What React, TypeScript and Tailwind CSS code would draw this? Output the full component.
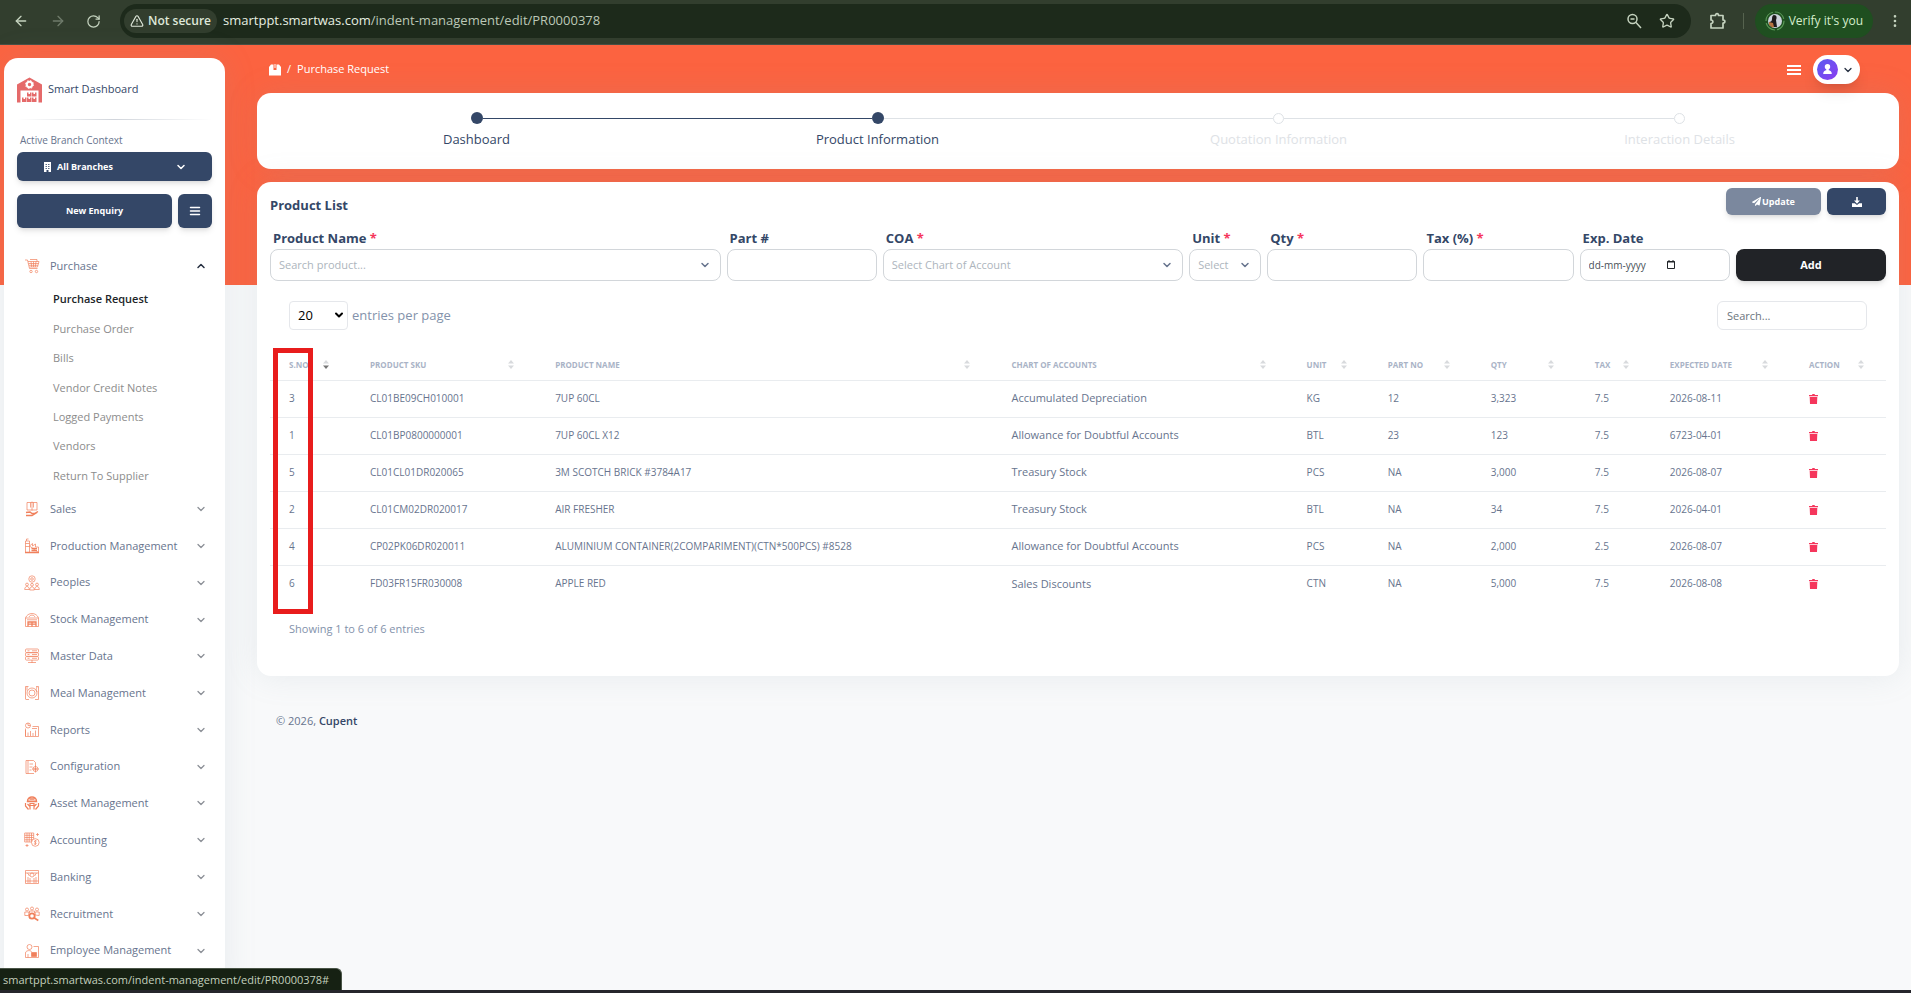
import React from 'react';
import { AlignJustify, ArrowLeft, ArrowRight, ChevronDown, ChevronUp, EllipsisVertical, RotateCw, Star, TriangleAlert } from 'lucide-react';
import { FaPaperPlane } from 'react-icons/fa';

const subItems = [
  'Purchase Request',
  'Purchase Order',
  'Bills',
  'Vendor Credit Notes',
  'Logged Payments',
  'Vendors',
  'Return To Supplier',
];

const icons: Record<string, React.ReactNode> = {
  Purchase: (
    <>
      <path d="M1 2h2.5l2 8.5h8" />
      <path d="M4 3.5h11l-1.5 5.5H5.5M4.5 5.5h10M5 7.3h9M7 3.5l.7 5.5M9.5 3.5V9M12 3.5l-.7 5.5M6 1.5h7v2" />
      <circle cx="7" cy="13.5" r="1.2" />
      <circle cx="12.5" cy="13.5" r="1.2" />
    </>
  ),
  Sales: (
    <>
      <path d="M3 1.5h10V9H3zM6.5 1.5v5M9.5 1.5v5M8 .5v9" />
      <path d="M2 11.5l4-.5 2 1.5h2.5l3.5-2M2 14.5h6l5-3" strokeWidth="1.4" />
    </>
  ),
  'Production Management': (
    <>
      <path d="M1.5 14.5V3h4v11.5M1.5 5.5h4M2.500 3V1h2M1.5 8.5h4M5.5 8l3-2.5V8l3-2v3h3v5.5z" />
      <path d="M1 14.5h14M7.5 10.5H13M7.5 12.5H13" strokeWidth="1.3" />
    </>
  ),
  Peoples: (
    <>
      <circle cx="8" cy="4" r="3.2" />
      <circle cx="8" cy="4" r="1.3" />
      <circle cx="3" cy="9.5" r="1.4" />
      <circle cx="8" cy="9.8" r="1.4" />
      <circle cx="13" cy="9.5" r="1.4" />
      <path d="M.7 14.5c0-4 4.6-4 4.6 0zM5.7 15c0-4.2 4.6-4.2 4.6 0zM10.7 14.5c0-4 4.6-4 4.6 0z" />
    </>
  ),
  'Stock Management': (
    <>
      <path d="M1.5 14.5V6c2-6 11-6 13 0v8.5zM1.5 6h13M3 7.8h10M5 5c1-2.5 5-2.5 6 0" />
      <path d="M4 14.5V10h8v4.5M4 12.2h8M8 10v4.5" strokeWidth="1.3" />
    </>
  ),
  'Master Data': (
    <>
      <rect x="1.5" y="1" width="13" height="3.5" rx="1" />
      <rect x="1.5" y="4.8" width="13" height="3.5" rx="1" />
      <rect x="1.5" y="8.6" width="13" height="3.5" rx="1" />
      <path d="M3.5 2.8h2M8 2.8h5M3.5 6.5h2M8 6.5h5M3.5 10.3h2M8 10.3h5M8 12v3M4 14.5h8" />
    </>
  ),
  'Meal Management': (
    <>
      <circle cx="8" cy="8" r="5" />
      <circle cx="8" cy="8" r="3" />
      <path d="M1.5 1.5v13M3 1.5v4M14.5 1.5v13M13 2c-1 2-1 3 0 5M1.5 1.5h3M12 1.5h2.5M2 14.5h3M11 14.5h3.5" />
    </>
  ),
  Reports: (
    <>
      <circle cx="4" cy="3.5" r="2.5" />
      <path d="M4 1v2.5h2.5M8.5 4.5h6v10h-13V8M1.5 6.5v8M8 6.5h5M4 14v-3.5M6.5 14V9M9 14v-3M11.5 14V8.5" />
    </>
  ),
  Configuration: (
    <>
      <path d="M2 1.5h7.5l2 2v4M2 1.5v13h8M4 1.5v13M5.5 5H9M5.5 8h3M5.5 11h2" />
      <circle cx="11.5" cy="10" r="2.5" />
      <circle cx="11.5" cy="10" r=".8" />
      <path d="M11.5 6.5v7M8 10h7" />
    </>
  ),
  'Asset Management': (
    <>
      <path d="M3.5 6.5c0-6 9-6 9 0zM5.5 4h5M4 6.3h8" strokeWidth="1.5" />
      <path d="M6 8.5h4v2H6zM1.5 8v3l3 3.5M14.5 8v3l-3 3.5M3.5 9L6 11.5v3M12.5 9L10 11.5v3" strokeWidth="1.2" />
    </>
  ),
  Accounting: (
    <>
      <path d="M.7 1h9v9h-9zM.7 3.3h9M.7 5.5h9M.7 7.8h9M3 1v9M5.2 1v9M7.5 1v9" />
      <circle cx="11.3" cy="10.5" r="3.8" fill="white" />
      <path d="M12.7 9c-2-1-3 1-1.3 1.5s.7 2.3-1.5 1.3M11.3 8v5M13.5 1v3M12 2.5h3M3 12v3M1.5 13.5h3" />
    </>
  ),
  Banking: (
    <>
      <path d="M1.5 1.5h13v13h-13zM1.5 4h13M3.5 4l2 3M12.5 4l-2 3M4 8v6M6 9v5M10 9v5M12 8v6M1.5 12h13" />
      <circle cx="8" cy="6" r="2" />
    </>
  ),
  Recruitment: (
    <>
      <circle cx="3" cy="3.5" r="1.5" />
      <circle cx="8" cy="2.5" r="1.5" />
      <circle cx="13" cy="3.5" r="1.5" />
      <path d="M.8 9.5V6h4v3M5.5 7V5h5v2M11.2 9V6h4v3.5zM.8 9.5h4" />
      <circle cx="8" cy="10" r="2.7" strokeWidth="1.8" />
      <path d="M10.3 12l4 2.5" strokeWidth="1.6" />
    </>
  ),
  'Employee Management': (
    <>
      <circle cx="5.5" cy="4" r="2.5" />
      <path d="M1.5 14.5V10c0-3 6-3 6-1M1.5 14.5h13v-11h-5M4 14.5V11" />
      <path d="M7.5 9.5h5v4h-5z" fill="#f0805c" />
    </>
  ),
};

const columns = [
  { label: 'S.NO', width: 'w-[81px]' },
  { label: 'PRODUCT SKU', width: 'w-[185px]' },
  { label: 'PRODUCT NAME', width: 'w-[456px]' },
  { label: 'CHART OF ACCOUNTS', width: 'w-[295px]' },
  { label: 'UNIT', width: 'w-[81px]' },
  { label: 'PART NO', width: 'w-[103px]' },
  { label: 'QTY', width: 'w-[104px]' },
  { label: 'TAX', width: 'w-[75px]' },
  { label: 'EXPECTED DATE', width: 'w-[139px]' },
  { label: 'ACTION', width: 'w-[96px]' },
];

const rows = [
  ['3', 'CL01BE09CH010001', '7UP 60CL', 'Accumulated Depreciation', 'KG', '12', '3,323', '7.5', '2026-08-11'],
  ['1', 'CL01BP0800000001', '7UP 60CL X12', 'Allowance for Doubtful Accounts', 'BTL', '23', '123', '7.5', '6723-04-01'],
  ['5', 'CL01CL01DR020065', '3M SCOTCH BRICK #3784A17', 'Treasury Stock', 'PCS', 'NA', '3,000', '7.5', '2026-08-07'],
  ['2', 'CL01CM02DR020017', 'AIR FRESHER', 'Treasury Stock', 'BTL', 'NA', '34', '7.5', '2026-04-01'],
  ['4', 'CP02PK06DR020011', 'ALUMINIUM CONTAINER(2COMPARIMENT)(CTN*500PCS) #8528', 'Allowance for Doubtful Accounts', 'PCS', 'NA', '2,000', '2.5', '2026-08-07'],
  ['6', 'FD03FR15FR030008', 'APPLE RED', 'Sales Discounts', 'CTN', 'NA', '5,000', '7.5', '2026-08-08'],
];

const steps = [
  { label: 'Dashboard', done: true, line: 'bg-[#344767]' },
  { label: 'Product Information', done: true, line: 'bg-[#dee2e6]' },
  { label: 'Quotation Information', done: false, line: 'bg-[#dee2e6]' },
  { label: 'Interaction Details', done: false, line: '' },
];

const panelShadow = 'shadow-[0_0_32px_0_rgba(136,152,170,0.15)]';

const fieldClass = 'h-8 w-full appearance-none rounded-lg border border-[#d2d6da] bg-white px-2 outline-none';

function BrowserBar() {
  return (
    <header className="flex h-[45px] shrink-0 items-start border-b border-[#474f45] bg-[#323e2e] pt-1 text-[#c5d3bf]">
      <div className="flex h-[34px] w-[120px] shrink-0 items-center justify-between pr-[19px] pl-[13px]">
        <button aria-label="Back"><ArrowLeft className="size-4" /></button>
        <button aria-label="Forward" className="text-[#6f7b6b]"><ArrowRight className="size-4" /></button>
        <button aria-label="Reload"><RotateCw className="size-[15px]" /></button>
      </div>
      <div className="flex h-[34px] flex-1 items-center rounded-full bg-[#1d2a1b] pr-4 pl-1">
        <button className="flex h-6 items-center gap-1 rounded-full bg-[#323e2e] px-1.5 text-xs font-semibold text-[#dfe8da]">
          <TriangleAlert className="size-[14px]" />
          Not secure
        </button>
        <p className="ml-1.5 flex-1 text-[13px] text-[#bcc8b7]">
          <span className="text-[#e6efe1]">smartppt.smartwas.com</span>/indent-management/edit/PR0000378
        </p>
        <button aria-label="Zoom" className="mr-[17px]">
          <svg viewBox="0 0 16 16" className="size-4" fill="none" stroke="currentColor" strokeWidth="1.5">
            <circle cx="6.5" cy="6" r="4.5" />
            <path d="M4.5 6h4M10 9.5l5 5.5" />
          </svg>
        </button>
        <button aria-label="Bookmark"><Star className="size-4" /></button>
      </div>
      <div className="flex h-[34px] shrink-0 items-center pr-2 pl-[18px]">
        <button aria-label="Extensions">
          <svg viewBox="0 0 18 18" className="size-[18px]" fill="none" stroke="currentColor" strokeWidth="1.7" strokeLinejoin="round">
            <path d="M2 3.5h4.5c0-2.5 3-2.5 3 0H14V8c2.5 0 2.5 3 0 3v5H2v-4.5c2.5 0 2.5-3.5 0-3.5z" />
          </svg>
        </button>
        <span className="mr-[11px] ml-4 h-4 w-px bg-[#56634f]" />
        <button className="flex h-[34px] items-center gap-1 rounded-full bg-[#1f4f20] px-2.5 text-xs text-[#d5edcc]">
          <svg viewBox="0 0 20 20" className="size-5">
            <circle cx="10" cy="10" r="9" fill="none" stroke="#5a9a58" strokeWidth="1.2" strokeDasharray="12 2" />
            <circle cx="10" cy="10" r="7" fill="#cdd3dc" />
            <path d="M9 4c3 0 3 3 2 5l1 7H6l-2-5c2 0 3-1 3-3 0-3 1-4 2-4z" fill="#1e1a1c" />
            <path d="M4 11l4 1 1 4-2 .5-3-3z" fill="#b8743f" />
          </svg>
          Verify it's you
        </button>
        <button aria-label="Menu" className="ml-3.5"><EllipsisVertical className="size-4" /></button>
      </div>
    </header>
  );
}

function Sidebar() {
  return (
    <aside className={`mt-[13px] ml-1 flex w-[221px] shrink-0 flex-col rounded-t-[14px] bg-white px-[13px] ${panelShadow}`}>
      <a href="#" className="mt-[18px] flex h-[27px] items-center gap-1.5 text-[11px] text-[#344767]">
        <svg viewBox="0 0 25 26" className="h-[26px] w-[25px]" fill="#e56a6a">
          <path d="M0 7.5L12.5.5 25 7.5v18h-3.5v-12h-18v12H0z" />
          <circle cx="12.5" cy="7.5" r="2.7" fill="none" stroke="white" strokeWidth="2" />
          <circle cx="12.5" cy="7.5" r="4" fill="none" stroke="white" strokeWidth="1" strokeDasharray="1.57 1.57" />
          <path d="M10 15.5h1.5V17H13v-1.5h1.5v4H10zM15 15.5h1.5V17H18v-1.5h1.5v4H15zM5 20.5h1.5V22H8v-1.5h1.5V25H5zM10 20.5h1.5V22H13v-1.5h1.5V25H10zM15 20.5h1.5V22H18v-1.5h1.5V25H15z" />
        </svg>
        Smart Dashboard
      </a>
      <div className="mt-4 h-px bg-linear-to-r from-transparent via-gray-300 to-transparent" />
      <p className="mt-3 ml-[3px] text-[10px] leading-4 text-[#67748e]">Active Branch Context</p>
      <button className="mt-1 flex h-[29px] items-center rounded-md bg-[#344767] pr-[25px] pl-[27px] text-[9px] font-bold text-white shadow-md">
        <svg viewBox="0 0 7 10" className="mr-1.5 h-2.5 w-[7px]">
          <path d="M0 0h7v10H4.500V8h-2v2H0z" fill="white" />
          <path d="M1.5 2.5H3M4 2.5h1.5M1.5 4.5H3M4 4.5h1.5M1.5 6.5H3M4 6.5h1.5" stroke="#344767" strokeWidth=".8" />
        </svg>
        All Branches
        <ChevronDown className="ml-auto size-3" strokeWidth={3} />
      </button>
      <div className="mt-[13px] flex gap-1.5">
        <button className="h-[34px] flex-1 rounded-md bg-[#344767] text-[9px] font-bold text-white shadow-md">New Enquiry</button>
        <button aria-label="List" className="flex w-[34px] items-center justify-center rounded-md bg-[#344767] text-white shadow-md">
          <AlignJustify className="size-3" strokeWidth={3} />
        </button>
      </div>
      <nav className="mt-5 mb-[21px] min-h-0 flex-1">
        <ul className="flex h-full flex-col text-[11px] text-[#67748e]">
          {Object.keys(icons).map((name) => {
            const open = name === 'Purchase';
            return (
              <li key={name} className={open ? 'flex flex-33 flex-col' : 'flex flex-5 flex-col'}>
                <button className="flex flex-5 items-center pr-[5px] pl-[7px] text-left">
                  <svg viewBox="0 0 16 16" className="size-4" fill="none" stroke="#f0805c" strokeWidth=".7">
                    {icons[name]}
                  </svg>
                  <span className="ml-2.5 flex-1">{name}</span>
                  {open ? (
                    <ChevronUp className="size-3 text-[#252f40]" strokeWidth={3} />
                  ) : (
                    <ChevronDown className="size-3 text-[#8b8f96]" strokeWidth={2.5} />
                  )}
                </button>
                {open && (
                  <ul className="flex flex-28 flex-col pl-9">
                    {subItems.map((item, i) => (
                      <li key={item} className="flex flex-1 items-center">
                        <a href="#" className={i === 0 ? 'font-semibold text-[#212529]' : 'text-[#8c8c8c]'}>{item}</a>
                      </li>
                    ))}
                  </ul>
                )}
              </li>
            );
          })}
        </ul>
      </nav>
    </aside>
  );
}

function Topbar() {
  return (
    <div className="flex h-[29px] items-center pr-[39px] pl-3 text-[11px] text-white">
      <svg viewBox="0 0 12 12" className="size-3" fill="white">
        <path d="M0 3L2 .5h2.5V6h3V.5H10L12 3v8.5H0z" />
        <path d="M5.5 0h1v4h-1z" />
      </svg>
      <span className="mx-1.5">/</span>
      <a href="#">Purchase Request</a>
      <button aria-label="Toggle menu" className="ml-auto flex w-3.5 flex-col gap-0.5">
        <span className="h-0.5 w-full bg-white" />
        <span className="h-0.5 w-full bg-white" />
        <span className="h-0.5 w-full bg-white" />
      </button>
      <button aria-label="Account" className="ml-3 flex h-[29px] items-center gap-1 rounded-full bg-white pr-1.5 pl-1 text-[#252f40] shadow-lg">
        <svg viewBox="0 0 21 21" className="size-[21px]">
          <defs>
            <linearGradient id="avatar" x1="0" y1="0" x2="1" y2="1">
              <stop offset="0" stopColor="#5b5cf0" />
              <stop offset="1" stopColor="#8b3cf0" />
            </linearGradient>
          </defs>
          <circle cx="10.5" cy="10.5" r="10.5" fill="url(#avatar)" />
          <circle cx="10.5" cy="7.7" r="2.7" fill="white" />
          <path d="M6.2 15c0-2.7 1.6-3.8 3.100-3.800V9.500h2.400v1.700c1.500 0 3.100 1.100 3.100 3.800z" fill="white" />
        </svg>
        <ChevronDown className="size-3" strokeWidth={2.5} />
      </button>
    </div>
  );
}

function Stepper() {
  return (
    <ol className={`mt-[9px] flex h-[76px] rounded-[14px] bg-white px-[19px] ${panelShadow}`}>
      {steps.map((step, i) => (
        <li key={step.label} className="flex flex-1 flex-col pt-[19px]">
          <div className="flex h-3 items-center">
            <span className={i === 0 ? 'flex-1' : `h-px flex-1 ${steps[i - 1].line}`} />
            <span className={step.done ? 'size-3 rounded-full bg-[#344767]' : 'size-[11px] rounded-full border border-[#dee2e6] bg-white'} />
            <span className={`h-px flex-1 ${step.line}`} />
          </div>
          <a href="#" className={step.done ? 'mt-[5px] text-center text-[13px] leading-5 text-[#344767]' : 'mt-[5px] text-center text-[13px] leading-5 text-[#dee2e6]'}>
            {step.label}
          </a>
        </li>
      ))}
    </ol>
  );
}

function Field({ id, label, required, children }: { id: string; label: string; required?: boolean; children: React.ReactNode }) {
  return (
    <div>
      <label htmlFor={id} className="mb-px ml-[3px] block text-[13px] leading-5 font-bold whitespace-nowrap text-[#344767]">
        {label} {required && <span className="text-[#f5365c]">*</span>}
      </label>
      <div className="relative">{children}</div>
    </div>
  );
}

function Picker({ id, placeholder }: { id: string; placeholder: string }) {
  return (
    <>
      <select id={id} className={`${fieldClass} text-[11px] text-[#adb5bd]`}>
        <option>{placeholder}</option>
      </select>
      <ChevronDown className="pointer-events-none absolute top-2.5 right-2.5 size-3 text-[#67748e]" strokeWidth={3} />
    </>
  );
}

function SortIcon({ active }: { active: boolean }) {
  return (
    <svg viewBox="0 0 6 9" className="h-[9px] w-1.5">
      <path d="M3 0l3 3.5H0z" fill="#d8dadd" />
      <path d="M3 9l3-3.5H0z" fill={active ? '#777' : '#d8dadd'} />
    </svg>
  );
}

function ProductList() {
  return (
    <section className={`mt-[13px] rounded-[14px] bg-white px-[13px] pt-1.5 pb-[39px] ${panelShadow}`}>
      <div className="flex items-start gap-1.5">
        <h1 className="mt-[7px] flex-1 text-[13px] leading-5 font-bold text-[#344767]">Product List</h1>
        <button className="flex h-[27px] w-[95px] items-center justify-center gap-px rounded-md bg-[#7b889e] text-[9px] font-bold text-white shadow-md">
          <FaPaperPlane className="size-[9px]" />
          Update
        </button>
        <button aria-label="Download" className="flex h-[27px] w-[59px] items-center justify-center rounded-md bg-[#344767] shadow-md">
          <svg viewBox="0 0 10 10" className="size-2.5" fill="white">
            <path d="M4.2 0h1.6v3.5H8L5 6.7 2 3.5h2.2zM0 6.2h2.8L5 8l2.2-1.8H10V10H0z" />
          </svg>
        </button>
      </div>

      <div className="mt-[13px] grid grid-cols-[450fr_150fr_300fr_72fr_150fr_150fr_150fr_150fr] items-end gap-1.5">
        <Field id="product" label="Product Name" required>
          <Picker id="product" placeholder="Search product..." />
        </Field>
        <Field id="part" label="Part #">
          <input id="part" className={`${fieldClass} text-[11px]`} />
        </Field>
        <Field id="coa" label="COA" required>
          <Picker id="coa" placeholder="Select Chart of Account" />
        </Field>
        <Field id="unit" label="Unit" required>
          <Picker id="unit" placeholder="Select" />
        </Field>
        <Field id="qty" label="Qty" required>
          <input id="qty" className={`${fieldClass} text-[11px]`} />
        </Field>
        <Field id="tax" label="Tax (%)" required>
          <input id="tax" className={`${fieldClass} text-[11px]`} />
        </Field>
        <Field id="date" label="Exp. Date">
          <input id="date" placeholder="dd-mm-yyyy" className={`${fieldClass} text-[10px] placeholder:text-[#495057]`} />
          <svg viewBox="0 0 8 9" className="absolute top-[11px] left-[87px] h-[9px] w-2" fill="none" stroke="#212529">
            <path d="M.5 1.5h7v7h-7z" />
            <path d="M0 2h8M2 0v2M6 0v2" />
          </svg>
        </Field>
        <button className="h-8 rounded-lg bg-[#212327] text-[11px] font-bold text-white shadow-md">Add</button>
      </div>

      <div className="mt-5 flex items-center justify-between px-[19px]">
        <label className="flex items-center gap-1 text-[13px] text-[#8392ab]">
          <span className="relative">
            <select className="h-[29px] w-[59px] appearance-none rounded border border-gray-200 bg-white pl-2 text-[13px] text-black">
              <option>20</option>
            </select>
            <ChevronDown className="pointer-events-none absolute top-2 right-[3px] size-3 text-black" strokeWidth={4} />
          </span>
          entries per page
        </label>
        <input aria-label="Search" placeholder="Search..." className="h-[29px] w-[150px] rounded-md border border-gray-200 px-[9px] text-[11px] placeholder:text-[#6c757d]" />
      </div>

      <div className="relative mt-5">
        <table className="w-full table-fixed text-left text-[#67748e]">
          <thead>
            <tr className="h-[30px] border-b border-[#e9ecef]">
              {columns.map((col, i) => (
                <th key={col.label} className={`${col.width} pr-[22px] pl-[19px] text-[8px] font-bold text-[#a9b3c6]`}>
                  <div className="flex items-center justify-between whitespace-nowrap">
                    {col.label}
                    <SortIcon active={i === 0} />
                  </div>
                </th>
              ))}
            </tr>
          </thead>
          <tbody>
            {rows.map((row) => (
              <tr key={row[0]} className="h-[37px] border-b border-[#e9ecef] last:border-0">
                {row.map((cell, i) => (
                  <td key={i} className={i === 3 ? 'pl-[19px] text-[11px] whitespace-nowrap' : 'pl-[19px] text-[10px] whitespace-nowrap'}>
                    {cell}
                  </td>
                ))}
                <td className="pl-[19px]">
                  <button aria-label="Delete" className="block">
                    <svg viewBox="0 0 9 10" className="h-2.5 w-[9px]" fill="#f5365c">
                      <path d="M0 1h3l.5-1h2L6 1h3v1.200H0zM.7 3h7.600L8 10H1z" />
                    </svg>
                  </button>
                </td>
              </tr>
            ))}
          </tbody>
        </table>
        <div className="pointer-events-none absolute -top-0.5 left-[3px] h-[266px] w-10 border-5 border-[#e81c1c]" />
      </div>
      <p className="mt-[19px] ml-[19px] text-[11px] leading-4 text-[#8392ab]">Showing 1 to 6 of 6 entries</p>
    </section>
  );
}

export default function App() {
  return (
    <div className="flex h-screen flex-col overflow-hidden font-['Open_Sans',sans-serif]">
      <BrowserBar />
      <div className="flex min-h-0 flex-1 bg-[linear-gradient(#fc6340_240px,#f8f9fa_240px)]">
        <Sidebar />
        <main className="ml-8 min-w-0 flex-1 pt-[10px] pr-3">
          <Topbar />
          <Stepper />
          <ProductList />
          <footer className="mt-[37px] ml-[19px] text-[11px] leading-4 text-[#67748e]">
            © 2026, <a href="#" className="font-semibold text-[#344767]">Cupent</a>
          </footer>
        </main>
      </div>
      <div className="h-[3px] shrink-0 bg-[#26262c]" />
      <div className="fixed bottom-[3px] left-0 h-[22px] rounded-tr-md border-t border-r border-[#4a5547] bg-[#162113] pt-px pr-3 pl-[3px] text-[11px] leading-5 text-[#c3d0bd]">
        smartppt.smartwas.com/indent-management/edit/PR0000378#
      </div>
    </div>
  );
}
